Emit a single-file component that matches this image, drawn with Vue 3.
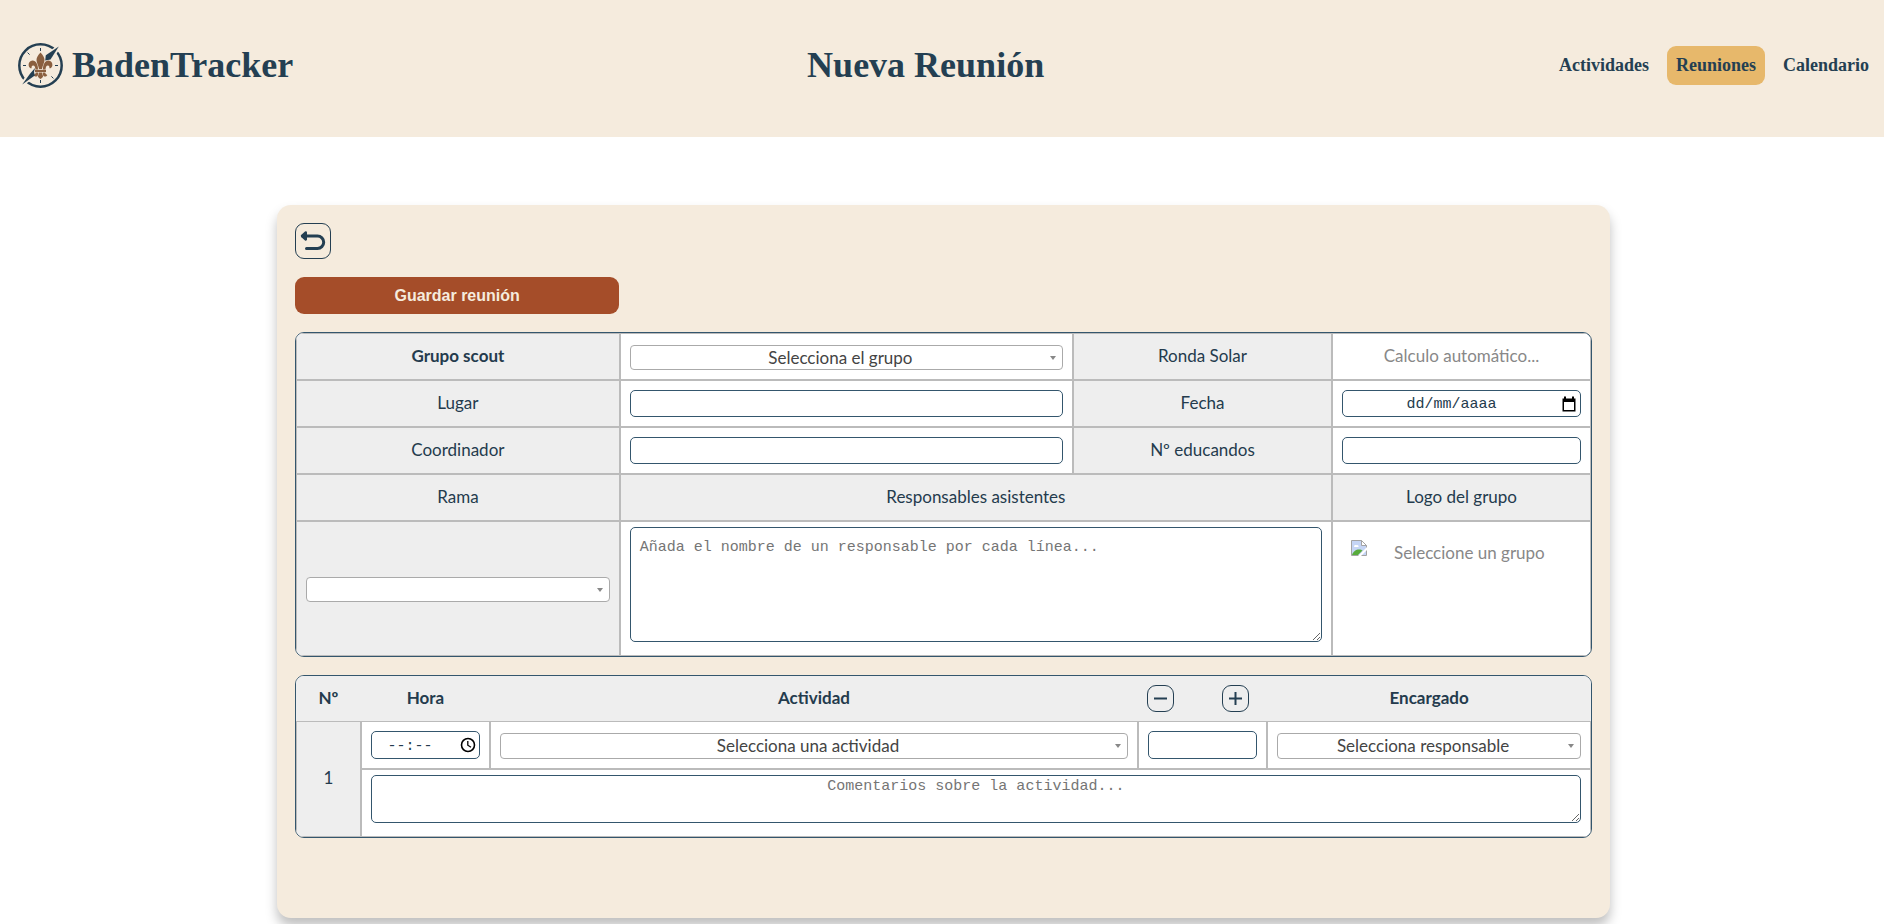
<script setup>
import { ref } from 'vue'

const links = [
  { label: 'Actividades', href: '#actividades', active: false },
  { label: 'Reuniones', href: '#reuniones', active: true },
  { label: 'Calendario', href: '#calendario', active: false },
]

const rows = ref([{ id: 1 }])
const addRow = () => rows.value.push({ id: rows.value.length + 1 })
const removeRow = () => {
  if (rows.value.length > 1) rows.value.pop()
}
</script>

<template>
  <div class="page">
    <header class="topbar">
      <a class="brand" href="#inicio">
        <svg class="brand-logo" viewBox="0 0 45 45" aria-hidden="true">
          <circle cx="22.5" cy="22.5" r="21.2" fill="none" stroke="#243f52" stroke-width="2.5" />
          <g stroke="#243f52" stroke-width="1">
            <path d="M22.5 5v3M22.5 37v3M5 22.5h3M37 22.5h3M9.6 9.6l2 2M33.4 33.4l2 2" />
          </g>
          <path d="M42 2.5 L27 12.5 V18 L33 17.5 Z M3 42.500 L17.500 33 L18 25 L10.500 31 Z" fill="#f5ebdd" stroke="#f5ebdd" stroke-width="2.5" />
          <g fill="#8a5f3f">
            <path d="M22.500 9.500c-2.700 3-4 5.200-4 7.500 0 2.700 1.800 4.900 2.500 9h3c.7-4.100 2.500-6.300 2.500-9 0-2.300-1.300-4.500-4-7.500z" />
            <path d="M20 26.500c.2-5-2-9-5.400-9-2.700 0-4.200 2.200-4 4.700.2 2 1.400 3.100 3 3.100-.2-1.800.3-2.900 1.500-2.900 1.500 0 2.200 1.600 2.400 4.100z" />
            <path d="M25 26.500c-.2-5 2-9 5.400-9 2.700 0 4.200 2.200 4 4.700-.2 2-1.400 3.100-3 3.100.2-1.800-.3-2.900-1.500-2.900-1.500 0-2.200 1.600-2.400 4.100z" />
            <path d="M17 26.800h11v2.200H17z" />
            <path d="M21 29.500h3c.2 2 1.200 3.100 1 4.100-.2.900-1.400 1.900-2.500 2.400-1.100-.5-2.300-1.500-2.500-2.400-.2-1 .8-2.100 1-4.100z" />
            <path d="M20.300 29.500h-2.600c-.1 1.400-.9 2-2 2.500.7 1.500 1.900 1.800 3 1.500 1.300-.5 1.600-2.300 1.600-4zM24.700 29.500h2.600c.1 1.400.9 2 2 2.500-.7 1.500-1.900 1.800-3 1.500-1.300-.5-1.600-2.300-1.600-4z" />
          </g>
          <path d="M40.800 3.500 L27.800 12.200 L27.200 17.500 L32.500 16.500 Z" fill="#243f52" />
          <path d="M4.200 41.500 L12 30.800 L17 25 L16 29 L16.800 32.500 Z" fill="#243f52" />
        </svg>
        <span class="brand-name">BadenTracker</span>
      </a>
      <h1 class="title">Nueva Reunión</h1>
      <nav class="nav">
        <a v-for="l in links" :key="l.label" :href="l.href" class="nav-link" :class="{ active: l.active }">{{ l.label }}</a>
      </nav>
    </header>

    <main class="card">
      <button class="icon-btn back" type="button" aria-label="Volver">
        <svg viewBox="0 0 34 34" aria-hidden="true">
          <path d="M6.500 12H21.500a6.200 6.200 0 0 1 0 12.400H10.500" fill="none" stroke="#243f52" stroke-width="3" stroke-linecap="round" />
          <path d="M9.800 8.500 L6 12 L9.800 15.500 Z" fill="#243f52" stroke="#243f52" stroke-width="2.400" stroke-linejoin="round" />
        </svg>
      </button>
      <button class="save" type="button">Guardar reunión</button>

      <div class="sheet">
        <table>
          <colgroup>
            <col class="w25" /><col class="w35" /><col class="w20" /><col class="w20" />
          </colgroup>
          <tbody>
            <tr>
              <td class="label strong"><label for="grupo">Grupo scout</label></td>
              <td>
                <div class="pick">
                  <select id="grupo"><option>Selecciona el grupo</option></select>
                </div>
              </td>
              <td class="label">Ronda Solar</td>
              <td class="hint">Calculo automático...</td>
            </tr>
            <tr>
              <td class="label"><label for="lugar">Lugar</label></td>
              <td><input id="lugar" class="field" type="text" /></td>
              <td class="label"><label for="fecha">Fecha</label></td>
              <td>
                <div class="with-icon">
                  <input id="fecha" class="field date" type="text" placeholder="dd/mm/aaaa" />
                  <svg class="field-icon" viewBox="0 0 16 16" aria-hidden="true">
                    <path d="M3 0.500h2v2h6v-2h2v2h1.500v13h-13v-13H3z" fill="#000" />
                    <path d="M3 6h10v8H3z" fill="#fff" />
                  </svg>
                </div>
              </td>
            </tr>
            <tr>
              <td class="label"><label for="coord">Coordinador</label></td>
              <td><input id="coord" class="field" type="text" /></td>
              <td class="label"><label for="educandos">Nº educandos</label></td>
              <td><input id="educandos" class="field" type="text" /></td>
            </tr>
            <tr>
              <td class="label"><label for="rama">Rama</label></td>
              <td class="label" colspan="2"><label for="asistentes">Responsables asistentes</label></td>
              <td class="label">Logo del grupo</td>
            </tr>
            <tr>
              <td class="rama-cell">
                <div class="pick">
                  <select id="rama"><option></option></select>
                </div>
              </td>
              <td class="area-cell" colspan="2">
                <textarea id="asistentes" class="field people" placeholder="Añada el nombre de un responsable por cada línea..."></textarea>
              </td>
              <td class="logo-cell">
                <div class="logo-slot">
                  <svg class="missing" viewBox="0 0 16 16" aria-hidden="true">
                    <path d="M.5.500h10l5 5v10H.5z" fill="#c5d5f5" stroke="#a3a3a3" />
                    <path d="M10.500.500v5h5z" fill="#fff" stroke="#a3a3a3" />
                    <path d="M3 6.500c0-1.500 1.500-2 2.200-1.200C6.500 4.500 8 5.500 7.500 7H3.500z" fill="#fff" />
                    <path d="M1 15c1-3.500 4-5.500 7-5.500 1.500 0 3 .5 3.500 1L7 15z" fill="#58ab3c" />
                    <path d="M7 16 16 7v3l-6 6z" fill="#fff" />
                  </svg>
                  <span>Seleccione un grupo</span>
                </div>
              </td>
            </tr>
          </tbody>
        </table>
      </div>

      <div class="sheet">
        <table>
          <colgroup>
            <col class="w5" /><col class="w10" /><col class="w50" /><col class="w10" /><col class="w25" />
          </colgroup>
          <thead>
            <tr>
              <th>Nº</th>
              <th>Hora</th>
              <th>Actividad</th>
              <th class="counter-cell">
                <div class="counter">
                  <button class="icon-btn small" type="button" aria-label="Quitar actividad" @click="removeRow">
                    <svg viewBox="0 0 25 25" aria-hidden="true"><path d="M6 12.500h13" stroke="#243f52" stroke-width="2" /></svg>
                  </button>
                  <button class="icon-btn small" type="button" aria-label="Añadir actividad" @click="addRow">
                    <svg viewBox="0 0 25 25" aria-hidden="true"><path d="M6 12.500h13M12.500 6v13" stroke="#243f52" stroke-width="2" /></svg>
                  </button>
                </div>
              </th>
              <th>Encargado</th>
            </tr>
          </thead>
          <tbody v-for="r in rows" :key="r.id">
            <tr>
              <td class="label" rowspan="2">{{ r.id }}</td>
              <td>
                <div class="with-icon">
                  <input class="field tall time" type="text" placeholder="--:--" aria-label="Hora" />
                  <svg class="field-icon" viewBox="0 0 16 16" aria-hidden="true">
                    <circle cx="8" cy="8" r="6.500" fill="none" stroke="#000" stroke-width="1.600" />
                    <path d="M7.800 4v4.200l3.200 2" fill="none" stroke="#000" stroke-width="1.300" />
                  </svg>
                </div>
              </td>
              <td>
                <div class="pick tall">
                  <select aria-label="Actividad"><option>Selecciona una actividad</option></select>
                </div>
              </td>
              <td><input class="field tall" type="text" aria-label="Duración" /></td>
              <td>
                <div class="pick tall">
                  <select aria-label="Encargado"><option>Selecciona responsable</option></select>
                </div>
              </td>
            </tr>
            <tr>
              <td class="area-cell" colspan="4">
                <textarea class="field comments" placeholder="Comentarios sobre la actividad..." aria-label="Comentarios"></textarea>
              </td>
            </tr>
          </tbody>
        </table>
      </div>
    </main>
  </div>
</template>

<style>
body {
  margin: 0;
  background: #fff;
}
</style>

<style scoped>
.page {
  min-height: 100vh;
  color: #243b4d;
  font-family: Lato, sans-serif;
  font-size: 17px;
}
.page *,
.page *::after {
  box-sizing: border-box;
}

.topbar {
  display: flex;
  align-items: center;
  justify-content: space-between;
  padding: 42px 6px 48px 18px;
  background: #f5ebdd;
  font-family: "Liberation Serif", serif;
  font-weight: 700;
}
.brand {
  display: flex;
  align-items: center;
  gap: 9px;
  height: 47px;
  padding-right: 8px;
  color: #243f52;
  text-decoration: none;
}
.brand-logo {
  width: 45px;
  height: 45px;
}
.brand-name,
.title {
  margin: 0;
  padding-bottom: 2px;
  color: #243f52;
  font-size: 36px;
  line-height: 42px;
}
.nav {
  display: flex;
  gap: 9px;
}
.nav-link {
  padding: 9px;
  border-radius: 9px;
  color: #243f52;
  font-size: 18px;
  line-height: 21px;
  text-decoration: none;
}
.nav-link.active {
  background: #e7b86b;
}

.card {
  display: flex;
  flex-direction: column;
  gap: 18px;
  margin: 68px 274px 0 277px;
  padding: 18px 18px 80px;
  border-radius: 14px;
  background: #f5ebdd;
  box-shadow: 0 8px 12px rgba(0, 0, 0, 0.25);
}
.icon-btn {
  display: block;
  padding: 0;
  border: 1px solid #243f52;
  border-radius: 9px;
  background: transparent;
}
.icon-btn svg {
  display: block;
  width: 100%;
  height: 100%;
}
.back {
  width: 36px;
  height: 36px;
}
.small {
  width: 27px;
  height: 27px;
}
.save {
  width: 25%;
  height: 37px;
  border: 0;
  border-radius: 9px;
  background: #a54d29;
  color: #f5ebdd;
  font: 700 16px "Liberation Sans", sans-serif;
}

.sheet {
  overflow: hidden;
  border: 1px solid #34566d;
  border-radius: 9px;
  background: #fff;
}
table {
  width: 100%;
  border-spacing: 0;
  table-layout: fixed;
}
.w5 { width: 5%; }
.w10 { width: 10%; }
.w20 { width: 20%; }
.w25 { width: 25%; }
.w35 { width: 35%; }
.w50 { width: 50%; }
td {
  height: 47px;
  padding: 9px;
  border: 1px solid #bbb;
  text-align: center;
  vertical-align: middle;
  line-height: 20px;
}
th {
  height: 45px;
  padding: 0 0 2px;
  background: #eee;
  font-weight: 700;
  line-height: 20px;
}
.counter-cell {
  padding: 0;
}
.label,
.hint {
  padding: 8px 9px 10px;
}
.label,
.rama-cell {
  background: #eee;
}
.strong {
  font-weight: 700;
}
.hint {
  color: #888;
}
.area-cell {
  padding: 5px 9px 13px;
}
.counter {
  display: flex;
  justify-content: space-between;
  padding: 0 18px 0 9px;
}

.field {
  display: block;
  width: 100%;
  height: 27px;
  margin: 0;
  padding: 2px 9px 0;
  border: 1px solid #34566d;
  border-radius: 5px;
  background: #fff;
  color: #243b4d;
  font: 15px/20px "Liberation Mono", monospace;
  text-align: center;
}
.field.tall {
  height: 28px;
}
.field::placeholder {
  color: #757575;
}
.field.date::placeholder,
.field.time::placeholder {
  color: #243b4d;
}
.field.date {
  padding: 2px 20px 0 0;
}
.field.time {
  padding: 2px 31px 0 0;
}
.field.people {
  height: 115px;
  padding: 10px 9px;
  text-align: left;
}
.field.comments {
  height: 48px;
  padding: 1px 0 0;
}
.with-icon {
  position: relative;
}
.field-icon {
  position: absolute;
  top: 6px;
  right: 4px;
  width: 16px;
  height: 16px;
}

.pick {
  position: relative;
  padding-top: 2px;
}
.pick select {
  display: block;
  width: 100%;
  height: 25px;
  padding: 0 20px 0 8px;
  border: 1px solid #aaa;
  border-radius: 4px;
  appearance: none;
  background: #fff;
  color: #444;
  font: 17px/20px Lato, sans-serif;
  text-align: center;
  text-align-last: center;
}
.pick.tall select {
  height: 26px;
}
.pick::after {
  content: "";
  position: absolute;
  top: 13px;
  right: 7px;
  border: 3px solid transparent;
  border-top: 4px solid #888;
  border-bottom: 0;
  pointer-events: none;
}

.logo-cell {
  padding: 18px;
  vertical-align: top;
}
.logo-slot {
  display: flex;
  align-items: flex-start;
  gap: 27px;
  color: #888;
}
.logo-slot span {
  padding-top: 3px;
}
.missing {
  flex: none;
  width: 16px;
  height: 16px;
}
</style>
